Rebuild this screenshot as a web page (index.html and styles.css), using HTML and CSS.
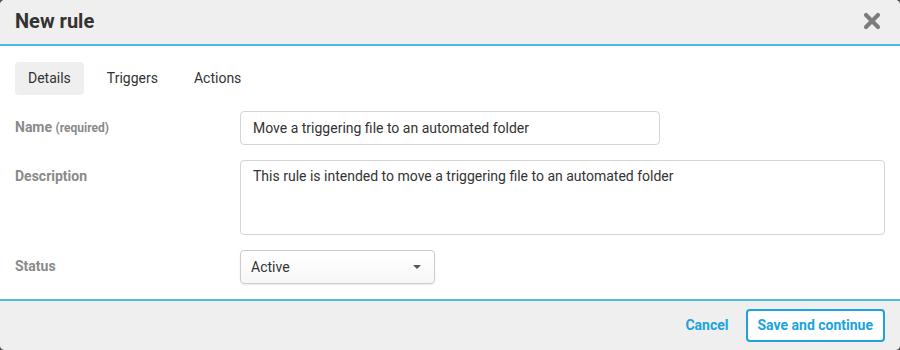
FILE: index.html
```html
<!DOCTYPE html>
<html lang="en">
  <head>
    <meta charset="UTF-8" />
    <title>New rule</title>
    <link rel="stylesheet" href="styles.css">
  </head>
  <body>
    <div class="modal">
      <div class="modal-header">
        <h2>New rule</h2>
        <button class="modal-close" aria-label="Close">
          <svg width="18" height="18" viewBox="0 0 18 18">
            <path d="M3 3 L15 15 M15 3 L3 15" stroke="#7c7c7c" stroke-width="4.2" stroke-linecap="round" />
          </svg>
        </button>
      </div>
      <div class="modal-body">
        <div class="tabs">
          <span class="tab active">Details</span>
          <span class="tab">Triggers</span>
          <span class="tab">Actions</span>
        </div>
        <div class="form-row">
          <label class="form-label">Name <small>(required)</small></label>
          <div class="form-field">
            <div class="input input-name">Move a triggering file to an automated folder</div>
          </div>
        </div>
        <div class="form-row">
          <label class="form-label">Description</label>
          <div class="form-field">
            <div class="input textarea">This rule is intended to move a triggering file to an automated folder</div>
          </div>
        </div>
        <div class="form-row">
          <label class="form-label">Status</label>
          <div class="form-field">
            <div class="select">
              <span>Active</span>
              <span class="caret"></span>
            </div>
          </div>
        </div>
      </div>
      <div class="modal-footer">
        <button class="btn-link">Cancel</button>
        <button class="btn-outline">Save and continue</button>
      </div>
    </div>
  </body>
</html>
```

FILE: styles.css
```css
* {
  box-sizing: border-box;
  margin: 0;
  padding: 0;
}

html,
body {
  height: 100%;
}

body {
  font-family: Roboto, "Liberation Sans", sans-serif;
  background-color: #555;
  color: #333;
}

.modal {
  height: 350px;
  background-color: #fff;
  border-radius: 5px;
  overflow: hidden;
  display: flex;
  flex-direction: column;
}

.modal-header {
  height: 46px;
  background-color: #efefef;
  border-bottom: 2px solid #4bbbe6;
  display: flex;
  align-items: center;
  justify-content: space-between;
  padding: 0 19px 0 15px;
}

.modal-header h2 {
  font-size: 20px;
  font-weight: 700;
  color: #333;
  margin-top: -1px;
}

.modal-close {
  background: none;
  border: 0;
  width: 18px;
  height: 18px;
  margin-top: -1px;
}

.modal-close svg {
  display: block;
}

.modal-body {
  flex: 1;
  padding: 16px 15px 0;
}

.tabs {
  display: flex;
  gap: 10px;
  margin-bottom: 16px;
}

.tab {
  font-size: 14px;
  color: #333;
  padding: 0 13px;
  height: 33px;
  line-height: 33px;
  border-radius: 4px;
}

.tab.active {
  background-color: #efefef;
}

.form-row {
  display: flex;
  margin-bottom: 15px;
}

.form-label {
  width: 225px;
  flex-shrink: 0;
  font-size: 14px;
  font-weight: 700;
  color: #8a8a8a;
  padding-top: 8px;
}

.form-label small {
  font-size: 12px;
}

.form-field {
  flex: 1;
}

.input {
  font-size: 14px;
  color: #333;
  border: 1px solid #d4d4d4;
  border-radius: 4px;
  padding: 0 12px;
  height: 34px;
  line-height: 32px;
}

.input-name {
  width: 420px;
}

.textarea {
  height: 75px;
  line-height: 20px;
  padding-top: 5px;
}

.select {
  width: 195px;
  height: 34px;
  border: 1px solid #ccc;
  border-radius: 4px;
  background: linear-gradient(#fff, #f7f7f7);
  box-shadow: 0 1px 2px rgb(0 0 0 / 0.08);
  display: flex;
  align-items: center;
  justify-content: space-between;
  padding: 0 13px 0 10px;
  font-size: 14px;
  color: #333;
}

.caret {
  width: 0;
  height: 0;
  border-left: 4px solid transparent;
  border-right: 4px solid transparent;
  border-top: 4px solid #555;
}

.modal-footer {
  height: 52px;
  background-color: #efefef;
  border-top: 2px solid #4bbbe6;
  display: flex;
  align-items: center;
  justify-content: flex-end;
  padding: 0 15px;
  gap: 17px;
}

.btn-link,
.btn-outline {
  font-family: Roboto, "Liberation Sans", sans-serif;
  font-size: 14px;
  font-weight: 700;
  color: #1aa3dd;
  background: none;
  cursor: pointer;
}

.btn-link {
  border: 0;
}

.btn-outline {
  height: 33px;
  padding: 0 10px;
  border: 2px solid #1aa3dd;
  border-radius: 4px;
  background-color: #fff;
}
```
